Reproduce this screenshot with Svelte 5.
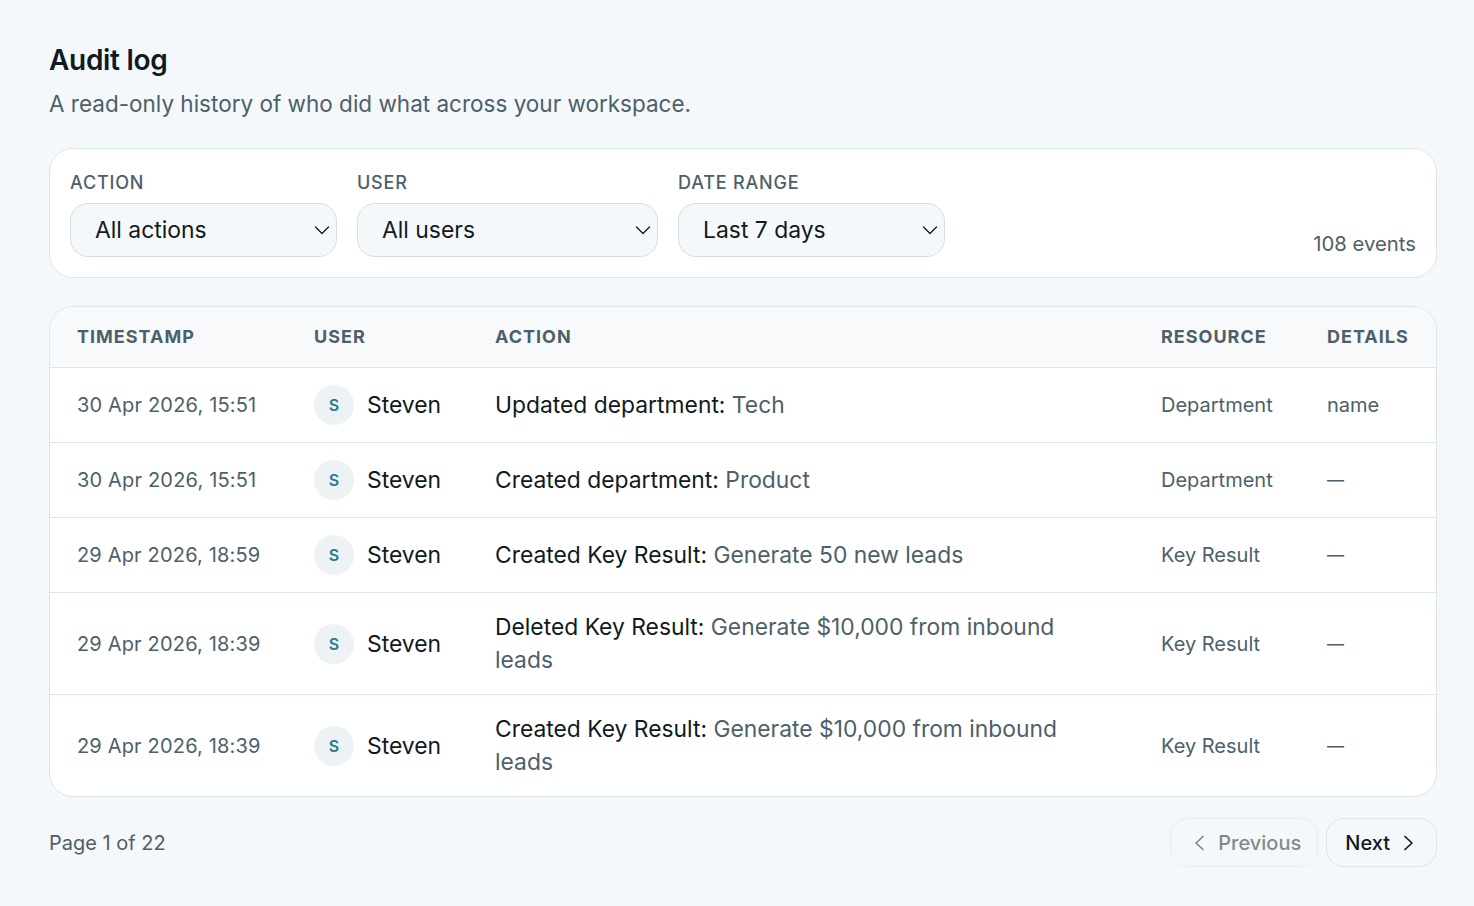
<script>
	const rows = [
		{ time: '30 Apr 2026, 15:51', verb: 'Updated department:', name: 'Tech', res: 'Department', det: 'name' },
		{ time: '30 Apr 2026, 15:51', verb: 'Created department:', name: 'Product', res: 'Department', det: '—' },
		{ time: '29 Apr 2026, 18:59', verb: 'Created Key Result:', name: 'Generate 50 new leads', res: 'Key Result', det: '—' },
		{ time: '29 Apr 2026, 18:39', verb: 'Deleted Key Result:', name: 'Generate $10,000 from inbound leads', res: 'Key Result', det: '—' },
		{ time: '29 Apr 2026, 18:39', verb: 'Created Key Result:', name: 'Generate $10,000 from inbound leads', res: 'Key Result', det: '—' }
	];
</script>

<div class="page">
	<h1>Audit log</h1>
	<p class="sub">A read-only history of who did what across your workspace.</p>

	<div class="filters">
		<div class="field">
			<span class="label">ACTION</span>
			<div class="select s1">
				<span>All actions</span>
				<svg width="16" height="14" viewBox="0 0 16 14"><path d="M1.5 4 8 10.500 14.500 4" /></svg>
			</div>
		</div>
		<div class="field">
			<span class="label">USER</span>
			<div class="select s2">
				<span>All users</span>
				<svg width="16" height="14" viewBox="0 0 16 14"><path d="M1.5 4 8 10.500 14.500 4" /></svg>
			</div>
		</div>
		<div class="field">
			<span class="label">DATE RANGE</span>
			<div class="select s1">
				<span>Last 7 days</span>
				<svg width="16" height="14" viewBox="0 0 16 14"><path d="M1.5 4 8 10.500 14.500 4" /></svg>
			</div>
		</div>
		<span class="count">108 events</span>
	</div>

	<div class="card">
		<div class="row head">
			<div>TIMESTAMP</div>
			<div>USER</div>
			<div>ACTION</div>
			<div>RESOURCE</div>
			<div>DETAILS</div>
		</div>
		{#each rows as r}
			<div class="row">
				<div class="muted time">{r.time}</div>
				<div class="user"><span class="avatar">S</span><span>Steven</span></div>
				<div class="action">{r.verb} <span class="name">{r.name}</span></div>
				<div class="muted">{r.res}</div>
				<div class="muted" class:dash={r.det === '—'}>{r.det}</div>
			</div>
		{/each}
	</div>

	<div class="pager">
		<span class="page-no">Page 1 of 22</span>
		<div class="btns">
			<div class="btn off">
				<svg width="16" height="16" viewBox="0 0 16 16"><path d="M14 1.500 7 8l7 6.500" /></svg>
				<span>Previous</span>
			</div>
			<div class="btn">
				<span>Next</span>
				<svg width="16" height="16" viewBox="0 0 16 16"><path d="m3 1.500 7 6.500-7 6.500" /></svg>
			</div>
		</div>
	</div>
</div>

<style>
	:global(body) {
		background: #f5f8fa;
		font-family: Inter, "Liberation Sans", sans-serif;
		color: #0f1a20;
	}

	.page {
		padding: 42px 37px 38px 49px;
	}

	h1 {
		margin: 0;
		font-size: 28px;
		line-height: 36px;
		font-weight: 600;
		letter-spacing: -0.3px;
		color: #111a20;
	}

	.sub {
		margin: 11px 0 0;
		font-size: 22.5px;
		line-height: 30px;
		color: #4d5f6b;
	}

	.filters {
		display: flex;
		gap: 20px;
		align-items: flex-end;
		margin-top: 29px;
		padding: 20px;
		background: #fff;
		border: 1px solid #dce5ea;
		border-radius: 24px;
	}

	.field {
		display: flex;
		flex-direction: column;
		gap: 6px;
	}

	.label {
		font-size: 18px;
		line-height: 28px;
		letter-spacing: 0.8px;
		font-weight: 500;
		color: #4d5f6b;
	}

	.select {
		display: flex;
		align-items: center;
		justify-content: space-between;
		height: 52px;
		padding: 0 6px 0 24px;
		background: #f5f8fa;
		border: 1px solid #d5dfe5;
		border-radius: 18px;
		font-size: 22.9px;
		color: #111a20;
	}

	.s1 { width: 235px; }
	.s2 { width: 269px; }

	.select svg path {
		fill: none;
		stroke: currentColor;
		stroke-width: 1.3;
		stroke-linecap: round;
		stroke-linejoin: round;
	}

	.btn svg path {
		fill: none;
		stroke: currentColor;
		stroke-width: 1.7;
		stroke-linecap: round;
		stroke-linejoin: round;
	}

	.count {
		margin-left: auto;
		font-size: 20.3px;
		line-height: 26px;
		color: #4d5f6b;
	}

	.card {
		margin-top: 28px;
		background: #fff;
		border: 1px solid #dce5ea;
		border-radius: 24px;
		overflow: hidden;
	}

	.row {
		display: grid;
		grid-template-columns: 237px 181px 1fr 166px 109px;
		align-items: center;
		padding: 17px 0 17px 27px;
		border-top: 1px solid #dce5ea;
		font-size: 20px;
	}

	.head {
		min-height: 26px;
		padding-top: 16px;
		padding-bottom: 18px;
		border-top: 0;
		background: #f7f9fb;
		font-size: 18px;
		font-weight: 700;
		letter-spacing: 1px;
		color: #4d5f6b;
	}

	.muted { color: #4d5f6b; }

	.time { letter-spacing: 0.17px; }

	.dash { font-size: 17px; }

	.user {
		display: flex;
		align-items: center;
		gap: 13px;
		font-size: 22.9px;
	}

	.avatar {
		display: grid;
		place-items: center;
		width: 40px;
		height: 40px;
		border-radius: 50%;
		background: #edf3f5;
		color: #2a7a90;
		font-size: 16px;
		font-weight: 600;
	}

	.action {
		font-size: 22.85px;
		line-height: 33px;
		padding: 1px 70px 0 0;
	}

	.name { color: #4d5f6b; }

	.pager {
		display: flex;
		align-items: center;
		justify-content: space-between;
		margin-top: 21px;
	}

	.page-no {
		font-size: 20px;
		color: #4d5f6b;
	}

	.btns {
		display: flex;
		gap: 8px;
	}

	.btn {
		display: flex;
		align-items: center;
		gap: 12px;
		height: 47px;
		padding: 0 18px;
		background: #f5f8fa;
		border: 1px solid #dce5ea;
		border-radius: 18px;
		font-size: 20px;
		font-weight: 500;
	}

	.off {
		gap: 13px;
		padding: 0 16px 0 18px;
		opacity: 0.5;
	}
</style>
